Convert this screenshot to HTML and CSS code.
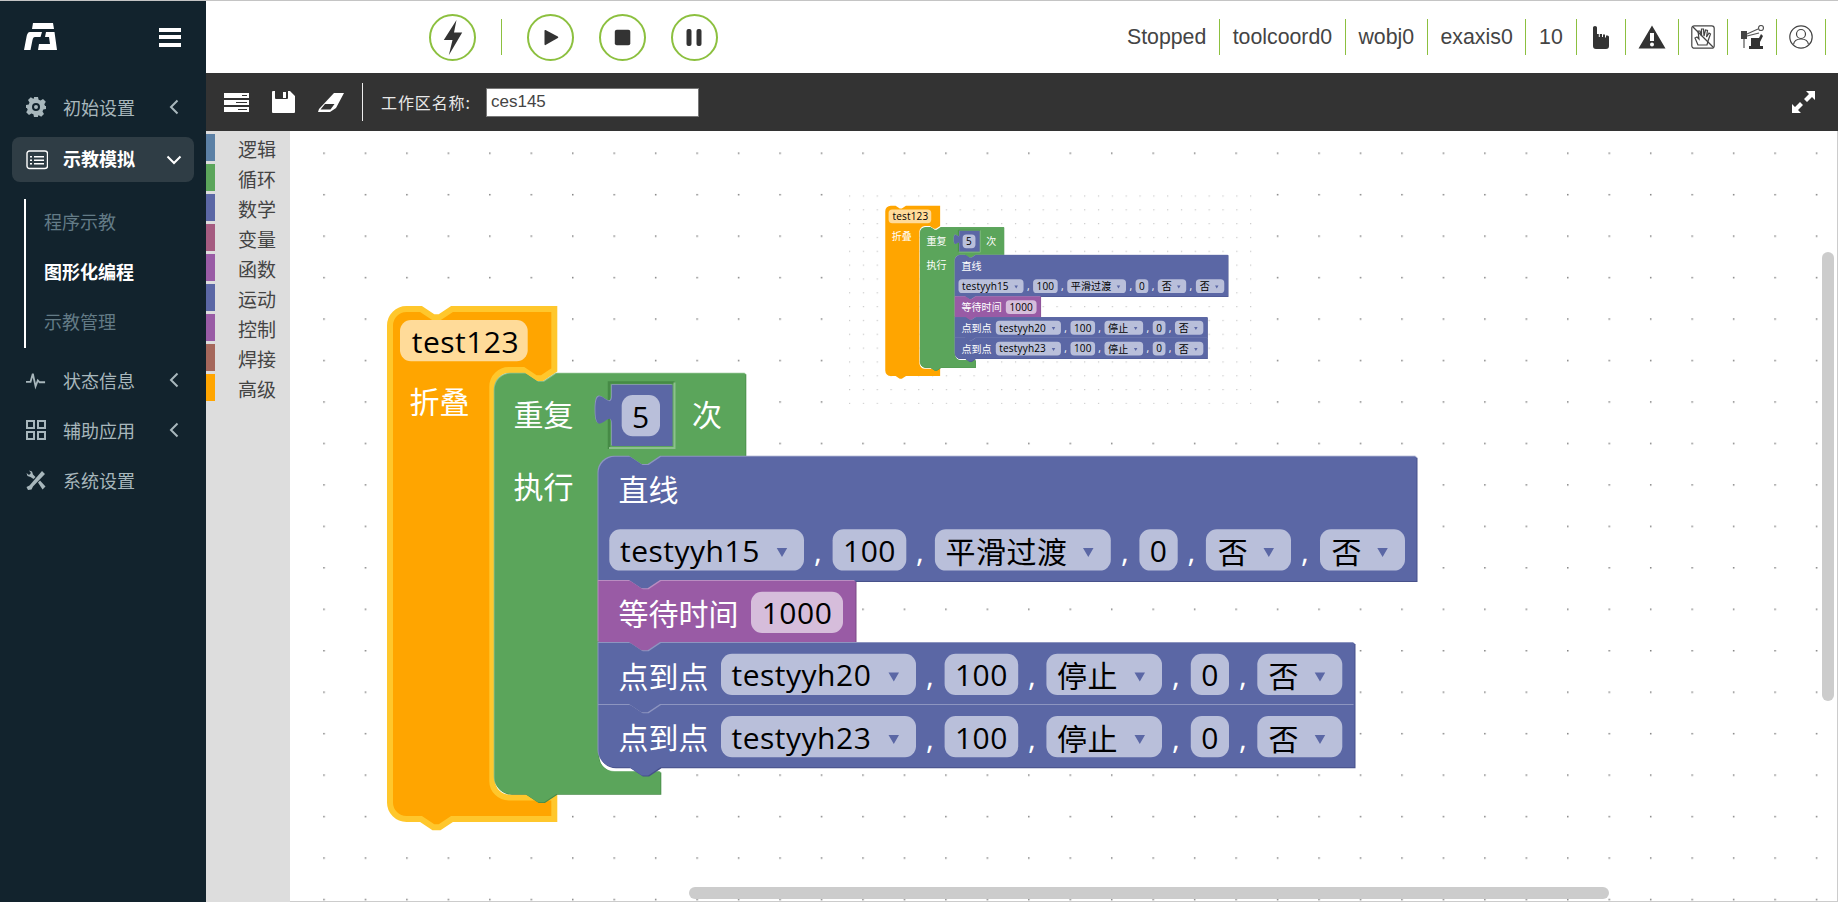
FILE: index.html
```html
<!DOCTYPE html>
<html>
<head>
    <meta charset="utf-8" />
    <title>图形化编程</title>
    <link rel="stylesheet" href="styles.css">
</head>
<body>
    <aside class="side">
        <div class="brand">
            <svg class="logo" viewBox="0 0 33 27"><path d="M9 0H29L30 6H8Z"/><path d="M6 9H18L16.500 14H11C9.500 14 9 15 8.500 17L6.500 27H0L2.500 14C3 11 4 9 6 9Z"/><path d="M22 9H30.500L33 27H14L15 21H26L25 14H21Z"/></svg>
            <div class="burger"><span></span><span></span><span></span></div>
        </div>
        <nav class="menu">
            <a class="item">
                <svg class="ico" viewBox="0 0 20 20"><path d="M8 0H12L12.600 2.700 14.600 3.500 17 2 19.800 4.800 18.300 7.200 19.100 9 20 9V12L17.300 12.600 16.500 14.600 18 17 15.200 19.800 12.800 18.300 12 18.700 12 20H8L7.400 17.300 5.400 16.500 3 18 .2 15.200 1.700 12.800.9 11 0 11V8L2.700 7.400 3.500 5.400 2 3 4.800 .2 7.200 1.700 8 1.300ZM10 6A4 4 0 1 0 10 14 4 4 0 1 0 10 6ZM10 8A2 2 0 1 1 10 12 2 2 0 1 1 10 8Z" fill-rule="evenodd"/></svg>
                <span>初始设置</span>
                <svg class="chev" viewBox="0 0 10 16"><path d="M8.500 1.500 2 8l6.500 6.500"/></svg>
            </a>
            <a class="item active">
                <svg class="ico" viewBox="0 0 22 20"><rect x="1" y="1" width="20.500" height="17.500" rx="2.500" class="line"/><path d="M4 6H6V7.500H4ZM8 6H18V7.500H8ZM4 9.500H6V11H4ZM8 9.500H18V11H8ZM4 13H6V14.500H4ZM8 13H18V14.500H8Z"/></svg>
                <span>示教模拟</span>
                <svg class="chev down" viewBox="0 0 16 10"><path d="M1.500 1.500 8 8l6.500-6.500"/></svg>
            </a>
            <div class="sub">
                <a>程序示教</a>
                <a class="current">图形化编程</a>
                <a>示教管理</a>
            </div>
            <a class="item">
                <svg class="ico" viewBox="0 0 22 20"><path class="line" d="M0 12H5L7.500 3 10.500 17 13 10.500 15 12.500H21"/></svg>
                <span>状态信息</span>
                <svg class="chev" viewBox="0 0 10 16"><path d="M8.500 1.500 2 8l6.500 6.500"/></svg>
            </a>
            <a class="item">
                <svg class="ico" viewBox="0 0 20 20"><path class="line" d="M1 1H8V8H1ZM12 1H19V8H12ZM1 12H8V19H1ZM12 12H19V19H12Z"/></svg>
                <span>辅助应用</span>
                <svg class="chev" viewBox="0 0 10 16"><path d="M8.500 1.500 2 8l6.500 6.500"/></svg>
            </a>
            <a class="item">
                <svg class="ico" viewBox="0 0 20 20"><path d="M3 .5 6 1.500 7 4.500 9.500 7 7.500 9 4.500 7 1.500 6 .5 3 3 5 5 3ZM16 1 19 4 7 16.500 5.500 19.500 2 20 .5 17 3.500 15.500ZM12 12.500 14 10.500 19.500 16.500 16.500 19.500Z"/></svg>
                <span>系统设置</span>
            </a>
        </nav>
    </aside>

    <div class="page">
        <header class="topbar">
            <div class="run">
                <button class="round"><svg viewBox="0 0 47 47"><path d="M27.500 6 14.800 26H23.500L19.800 41.200 33.200 18.500H25Z"/></svg></button>
                <i class="vline"></i>
                <button class="round"><svg viewBox="0 0 47 47"><path d="M18.500 16 30.800 22.500Q32 23.300 30.800 24L18.500 31Q17.500 31.500 17.500 30V17Q17.500 15.500 18.500 16Z"/></svg></button>
                <button class="round"><svg viewBox="0 0 47 47"><rect x="15.800" y="15.800" width="15.500" height="15.500" rx="2"/></svg></button>
                <button class="round"><svg viewBox="0 0 47 47"><rect x="15.500" y="15" width="5" height="17" rx="2"/><rect x="25.500" y="15" width="5" height="17" rx="2"/></svg></button>
            </div>
            <ul class="status">
                <li>Stopped</li>
                <li>toolcoord0</li>
                <li>wobj0</li>
                <li>exaxis0</li>
                <li>10</li>
                <li class="tile"><svg class="st-ico hand" viewBox="0 0 17 23"><path d="M1 1.500Q1 0 3 0 5 0 5 1.500V8H6.800V11H7.800V8H10V11H11V8.500H13V11.500H14V9.500H15.500Q17 9.500 17 11V20Q17 23 14 23H4Q1 23 1 20Z"/></svg></li>
                <li class="tile wide"><svg class="st-ico warn" viewBox="0 0 28 24"><path fill-rule="evenodd" d="M14 .5 27.500 23.500H.5ZM12 8V16H16V8ZM14 17.500A2 2 0 1 0 14 21.500 2 2 0 1 0 14 17.500Z"/></svg></li>
                <li class="tile"><svg class="st-ico nohand" viewBox="0 0 24 24"><rect x=".8" y=".8" width="22.400" height="22.400" rx="2.500"/><path d="M7 20 4 13 6 12 8 14 7 6 9 6 10.500 11 10.500 4 12.500 4 13 11 14.500 5 16.500 5.500 15.500 12 18 8 19.500 9 17 16 16 20Z"/><path d="M2 2 22 22"/></svg></li>
                <li class="tile"><svg class="st-ico robot" viewBox="0 0 24 24"><rect x="1" y="6" width="6" height="8" fill="#444"/><path class="w" d="M4 14V23"/><path class="w" d="M7 9 18 4M7 11 19 8"/><circle class="w" cx="21" cy="3" r="2.500"/><path d="M11 13H19L21 9 23 11 20 17V21H23V24H9V21H11Z"/></svg></li>
                <li class="tile"><svg class="st-ico user" viewBox="0 0 24 24"><circle cx="12" cy="12" r="11.200"/><circle cx="12" cy="9" r="4.500"/><path d="M4.500 19.500C5 16 8 14 12 14S19 16 19.500 19.500"/></svg></li>
            </ul>
        </header>

        <div class="toolbar">
            <svg class="tool-ico" width="25" height="19" viewBox="0 0 25 19"><path fill-rule="evenodd" d="M0 0H25V5H0ZM18 2V3H23V2ZM0 7H25V12H0ZM12 9V10H23V9ZM0 14H25V19H0ZM14 16V17H23V16Z"/></svg>
            <svg class="tool-ico" width="23" height="22" viewBox="0 0 23 22"><path fill-rule="evenodd" d="M0 1Q0 0 1 0H3V7Q3 8 4 8H15Q16 8 16 7V0H18L23 5V21Q23 22 22 22H1Q0 22 0 21ZM11 1H14V7H11Z"/></svg>
            <svg class="tool-ico" width="26" height="19" viewBox="0 0 26 19"><path fill-rule="evenodd" d="M16 0H26L18 15 12 19H0L1 16ZM7 11 2.500 16.500H12.500L16.500 11Z"/></svg>
            <i class="tool-line"></i>
            <label class="ws-label">工作区名称:</label>
            <input class="ws-name" type="text" value="ces145" />
            <svg class="expand" width="23" height="22" viewBox="0 0 23 22"><path d="M14 0H23V9L20 6 15 11 12 8 17 3ZM9 22H0V13L3 16 8 11 11 14 6 19Z"/></svg>
        </div>

        <main class="editor">
            <div class="toolbox">
                <div class="cat"><i class="c-logic"></i>逻辑</div>
                <div class="cat"><i class="c-loop"></i>循环</div>
                <div class="cat"><i class="c-math"></i>数学</div>
                <div class="cat"><i class="c-var"></i>变量</div>
                <div class="cat"><i class="c-func"></i>函数</div>
                <div class="cat"><i class="c-move"></i>运动</div>
                <div class="cat"><i class="c-ctrl"></i>控制</div>
                <div class="cat"><i class="c-weld"></i>焊接</div>
                <div class="cat"><i class="c-adv"></i>高级</div>
            </div>
            <div class="canvas">
                <svg class="ws" width="1548" height="770">
                    <defs>
                        <pattern id="grid" patternUnits="userSpaceOnUse" x="572" y="318.300" width="41.460" height="41.460"><rect width="1.500" height="1.500" fill="#808080"/></pattern>
                        <pattern id="grid-mini" patternUnits="userSpaceOnUse" x="849" y="195.400" width="13.830" height="13.830"><rect width="1.200" height="1.200" fill="#c8c8c8"/></pattern>

                        <path id="p-orange" d="M390 325.500A16.500 16.500 0 0 1 406.500 309H421l12.400 8.300 6.200 0 12.400-8.300H554.300V370l-12.400 8.300-6.200 0-12.400-8.300H509A16.500 16.500 0 0 0 492.300 386.500V781A16.500 16.500 0 0 0 509 797.500H554.300V819H452l-12.400 8.300-6.200 0-12.400-8.300H406.500A16.500 16.500 0 0 1 390 802.500Z"/>
                        <path id="p-green" d="M494.500 390A16.500 16.500 0 0 1 511 373.500H525.500l12.400 8.300 6.200 0 12.400-8.300H745.500V456.500H660.500l-12.400 8.300-6.200 0-12.400-8.300H615A16.500 16.500 0 0 0 598.500 473V755A16.500 16.500 0 0 0 615 771.700H660.500V794H556.500l-12.400 8.300-6.200 0-12.400-8.300H511A16.500 16.500 0 0 1 494.500 777.500Z"/>
                        <path id="p-val" d="M612 385H672.500V446H612V425.500c0-20.700-16.600 16.600-16.600-15.500s16.600 5.200 16.600-15.500Z"/>
                        <path id="p-line" d="M598.500 473A16.500 16.500 0 0 1 615 456.700H630l12.400 8.300 6.200 0 12.400-8.300H1416.500V581H660.500l-12.400 8.300-6.200 0-12.400-8.300H598.500Z"/>
                        <path id="p-wait" d="M598.500 581H630l12.400 8.300 6.200 0 12.400-8.300H855.500V642.500H660.500l-12.400 8.300-6.200 0-12.400-8.300H598.500Z"/>
                        <path id="p-pt1" d="M598.500 643H630l12.400 8.300 6.200 0 12.400-8.300H1354.500V705H660.500l-12.400 8.300-6.200 0-12.400-8.300H598.500Z"/>
                        <path id="p-pt2" d="M598.500 705H630l12.400 8.300 6.200 0 12.400-8.300H1354.500V767.300H660.500l-12.400 8.300-6.200 0-12.400-8.300H615A16.500 16.500 0 0 1 598.500 750.800Z"/>

                        <g id="shapes">
                            <use href="#p-green" class="g-light" transform="translate(-.8 -.8)"/>
                            <use href="#p-green" class="g-dark" transform="translate(.8 .8)"/>
                            <use href="#p-green" class="g-fill"/>
                            <path class="g-hole-d" d="M609 449V382.500H674.500"/>
                            <path class="g-hole-l" d="M674.500 382.500V448H609"/>
                            <use href="#p-val" class="b-light" transform="translate(-.8 -.8)"/>
                            <use href="#p-val" class="b-fill"/>

                            <use href="#p-line" class="b-light" transform="translate(-1 -1)"/>
                            <use href="#p-line" class="b-dark" transform="translate(1 1)"/>
                            <use href="#p-line" class="b-fill"/>
                            <use href="#p-wait" class="p-light" transform="translate(-1 -1)"/>
                            <use href="#p-wait" class="p-dark" transform="translate(1 1)"/>
                            <use href="#p-wait" class="p-fill"/>
                            <use href="#p-pt1" class="b-light" transform="translate(-1 -1)"/>
                            <use href="#p-pt1" class="b-dark" transform="translate(1 1)"/>
                            <use href="#p-pt1" class="b-fill"/>
                            <use href="#p-pt2" class="b-light" transform="translate(-1 -1)"/>
                            <use href="#p-pt2" class="b-dark" transform="translate(1 1)"/>
                            <use href="#p-pt2" class="b-fill"/>

                            <rect class="chip-o" x="400" y="320" width="127.700" height="41.300" rx="11"/>
                            <rect class="chip" x="621.700" y="395" width="38.300" height="41.300" rx="11"/>

                            <rect class="chip" x="609.300" y="529.300" width="194.700" height="41.300" rx="11"/>
                            <rect class="chip" x="832.600" y="529.300" width="73.700" height="41.300" rx="11"/>
                            <rect class="chip" x="934.900" y="529.300" width="175.900" height="41.300" rx="11"/>
                            <rect class="chip" x="1139.400" y="529.300" width="38.300" height="41.300" rx="11"/>
                            <rect class="chip" x="1205.900" y="529.300" width="85.100" height="41.300" rx="11"/>
                            <rect class="chip" x="1320" y="529.300" width="85" height="41.300" rx="11"/>

                            <rect class="chip-p" x="751" y="591.700" width="92" height="41.300" rx="11"/>

                            <rect class="chip" x="721" y="653.700" width="195" height="41.300" rx="11"/>
                            <rect class="chip" x="944.600" y="653.700" width="73.600" height="41.300" rx="11"/>
                            <rect class="chip" x="1046.400" y="653.700" width="115.600" height="41.300" rx="11"/>
                            <rect class="chip" x="1190.800" y="653.700" width="38.200" height="41.300" rx="11"/>
                            <rect class="chip" x="1257.300" y="653.700" width="85" height="41.300" rx="11"/>

                            <rect class="chip" x="721" y="716" width="195" height="41.300" rx="11"/>
                            <rect class="chip" x="944.600" y="716" width="73.600" height="41.300" rx="11"/>
                            <rect class="chip" x="1046.400" y="716" width="115.600" height="41.300" rx="11"/>
                            <rect class="chip" x="1190.800" y="716" width="38.200" height="41.300" rx="11"/>
                            <rect class="chip" x="1257.300" y="716" width="85" height="41.300" rx="11"/>

                            <path class="arrow" d="M776.700 548H787.200L782 557ZM1083 548H1093.500L1088.300 557ZM1263.500 548H1274L1268.800 557ZM1377.300 548H1387.800L1382.600 557Z"/>
                            <path class="arrow" d="M888.500 672.500H899L893.800 681.500ZM1134.500 672.500H1145L1139.800 681.500ZM1314.700 672.500H1325.200L1320 681.500Z"/>
                            <path class="arrow" d="M888.500 735H899L893.800 744ZM1134.500 735H1145L1139.800 744ZM1314.700 735H1325.200L1320 744Z"/>
                        </g>
                    </defs>

                    <g transform="translate(-290 -131)">
                        <rect x="290" y="131" width="1548" height="771" fill="url(#grid)"/>
                        <rect x="849" y="193" width="405" height="211" fill="#fff"/>
                        <rect x="849" y="193" width="405" height="211" fill="url(#grid-mini)"/>

                        <g transform="translate(755 102.500) scale(.334)">
                            <use href="#p-orange" class="o-fill"/>
                            <use href="#shapes"/>
                            <text class="val" x="411.700" y="353">test123</text>
                            <text class="lbl" x="409.500" y="413">折叠</text>
                            <text class="lbl" x="513.500" y="425.500">重复</text>
                            <text class="val mid" x="640.800" y="427.500">5</text>
                            <text class="lbl" x="692" y="425.500">次</text>
                            <text class="lbl" x="513.500" y="498">执行</text>
                            <text class="lbl" x="618.500" y="500.500">直线</text>
                            <text class="val" x="620" y="561.800">testyyh15</text>
                            <text class="lbl" x="814" y="561.800">,</text>
                            <text class="val mid" x="869.500" y="561.800">100</text>
                            <text class="lbl" x="916" y="561.800">,</text>
                            <text class="val" x="945.400" y="562.500">平滑过渡</text>
                            <text class="lbl" x="1121" y="561.800">,</text>
                            <text class="val mid" x="1158.500" y="561.800">0</text>
                            <text class="lbl" x="1187.500" y="561.800">,</text>
                            <text class="val" x="1217.700" y="562.500">否</text>
                            <text class="lbl" x="1301" y="561.800">,</text>
                            <text class="val" x="1331.500" y="562.500">否</text>
                            <text class="lbl" x="618.500" y="624.500">等待时间</text>
                            <text class="val mid" x="797" y="624">1000</text>
                            <text class="lbl" x="618.500" y="688">点到点</text>
                            <text class="val" x="731.500" y="686">testyyh20</text>
                            <text class="lbl" x="926" y="686">,</text>
                            <text class="val mid" x="981.400" y="686">100</text>
                            <text class="lbl" x="1028" y="686">,</text>
                            <text class="val" x="1057" y="687">停止</text>
                            <text class="lbl" x="1172" y="686">,</text>
                            <text class="val mid" x="1210" y="686">0</text>
                            <text class="lbl" x="1239" y="686">,</text>
                            <text class="val" x="1268.500" y="687">否</text>
                            <text class="lbl" x="618.500" y="749">点到点</text>
                            <text class="val" x="731.500" y="748.500">testyyh23</text>
                            <text class="lbl" x="926" y="748.500">,</text>
                            <text class="val mid" x="981.400" y="748.500">100</text>
                            <text class="lbl" x="1028" y="748.500">,</text>
                            <text class="val" x="1057" y="749.500">停止</text>
                            <text class="lbl" x="1172" y="748.500">,</text>
                            <text class="val mid" x="1210" y="748.500">0</text>
                            <text class="lbl" x="1239" y="748.500">,</text>
                            <text class="val" x="1268.500" y="749.500">否</text>
                        </g>

                        <g>
                            <use href="#p-orange" class="o-fill selected"/>
                            <use href="#shapes"/>
                            <text class="val" x="411.700" y="353">test123</text>
                            <text class="lbl" x="409.500" y="413">折叠</text>
                            <text class="lbl" x="513.500" y="425.500">重复</text>
                            <text class="val mid" x="640.800" y="427.500">5</text>
                            <text class="lbl" x="692" y="425.500">次</text>
                            <text class="lbl" x="513.500" y="498">执行</text>
                            <text class="lbl" x="618.500" y="500.500">直线</text>
                            <text class="val" x="620" y="561.800">testyyh15</text>
                            <text class="lbl" x="814" y="561.800">,</text>
                            <text class="val mid" x="869.500" y="561.800">100</text>
                            <text class="lbl" x="916" y="561.800">,</text>
                            <text class="val" x="945.400" y="562.500">平滑过渡</text>
                            <text class="lbl" x="1121" y="561.800">,</text>
                            <text class="val mid" x="1158.500" y="561.800">0</text>
                            <text class="lbl" x="1187.500" y="561.800">,</text>
                            <text class="val" x="1217.700" y="562.500">否</text>
                            <text class="lbl" x="1301" y="561.800">,</text>
                            <text class="val" x="1331.500" y="562.500">否</text>
                            <text class="lbl" x="618.500" y="624.500">等待时间</text>
                            <text class="val mid" x="797" y="624">1000</text>
                            <text class="lbl" x="618.500" y="688">点到点</text>
                            <text class="val" x="731.500" y="686">testyyh20</text>
                            <text class="lbl" x="926" y="686">,</text>
                            <text class="val mid" x="981.400" y="686">100</text>
                            <text class="lbl" x="1028" y="686">,</text>
                            <text class="val" x="1057" y="687">停止</text>
                            <text class="lbl" x="1172" y="686">,</text>
                            <text class="val mid" x="1210" y="686">0</text>
                            <text class="lbl" x="1239" y="686">,</text>
                            <text class="val" x="1268.500" y="687">否</text>
                            <text class="lbl" x="618.500" y="749">点到点</text>
                            <text class="val" x="731.500" y="748.500">testyyh23</text>
                            <text class="lbl" x="926" y="748.500">,</text>
                            <text class="val mid" x="981.400" y="748.500">100</text>
                            <text class="lbl" x="1028" y="748.500">,</text>
                            <text class="val" x="1057" y="749.500">停止</text>
                            <text class="lbl" x="1172" y="748.500">,</text>
                            <text class="val mid" x="1210" y="748.500">0</text>
                            <text class="lbl" x="1239" y="748.500">,</text>
                            <text class="val" x="1268.500" y="749.500">否</text>
                        </g>
                    </g>
                </svg>
                <div class="scroll-v"></div>
                <div class="scroll-h"></div>
            </div>
        </main>
    </div>
</body>
</html>
```

FILE: styles.css
```css
* {
    box-sizing: border-box;
}

html, body {
    margin: 0;
    padding: 0;
    height: 100%;
}

body {
    display: flex;
    height: 902px;
    overflow: hidden;
    border-top: 1px solid #c4c4c4;
    font-family: "Noto Sans CJK SC", "Liberation Sans", sans-serif;
    background: #fff;
}

/* sidebar */
.side {
    width: 206px;
    flex: none;
    background: #12232d;
    color: #a8b7bc;
    font-size: 18px;
}

.brand {
    height: 72px;
    display: flex;
    align-items: center;
    justify-content: space-between;
    padding: 0 25px 0 24px;
}

.logo {
    width: 33px;
    height: 27px;
    fill: #fff;
    margin-bottom: 1px;
}

.burger span {
    display: block;
    width: 22px;
    height: 4px;
    margin: 3.500px 0;
    background: #fff;
}

.menu {
    padding: 11px 12px 0;
}

.item {
    display: flex;
    align-items: center;
    height: 45px;
    margin-bottom: 5px;
    padding-left: 14px;
    border-radius: 8px;
}

.item span {
    margin-left: 17px;
}

.ico {
    width: 20px;
    height: 20px;
    flex: none;
    fill: #a8b7bc;
}

.ico .line {
    fill: none;
    stroke: #a8b7bc;
    stroke-width: 2;
}

.chev {
    width: 10px;
    height: 16px;
    margin-left: auto;
    margin-right: 15px;
    fill: none;
    stroke: #a8b7bc;
    stroke-width: 2;
}

.item.active {
    margin-top: 8px;
    background: #2f3d45;
    color: #fff;
    font-weight: bold;
}

.item.active span {
    padding-bottom: 3px;
}

.item.active .ico {
    width: 22px;
    margin-right: -2px;
    fill: #fff;
}

.item.active .ico .line {
    stroke: #fff;
    stroke-width: 1.400;
}

.chev.down {
    width: 16px;
    height: 10px;
    margin-right: 12px;
    stroke: #fff;
}

.sub {
    margin: 17px 0 9px 12px;
    height: 149px;
    padding-left: 18px;
    border-left: 2px solid #fff;
    color: #637b86;
}

.sub a {
    display: flex;
    align-items: center;
    height: 49.660px;
    padding-bottom: 5px;
}

.sub .current {
    color: #fff;
    font-weight: bold;
}

/* top */
.page {
    flex: 1;
    min-width: 0;
    display: flex;
    flex-direction: column;
}

.topbar {
    height: 72px;
    flex: none;
    display: flex;
    align-items: center;
    justify-content: space-between;
    padding: 0 12px 0 223px;
}

.run {
    display: flex;
    align-items: center;
}

.round {
    width: 47px;
    height: 47px;
    padding: 0;
    margin-right: 25px;
    border: 2px solid #8cc03f;
    border-radius: 50%;
    background: #fff;
}

.round svg {
    display: block;
    width: 47px;
    height: 47px;
    margin: -2px;
    fill: #333;
}

.vline {
    width: 1px;
    height: 36px;
    margin-right: 25px;
    background: #8cc03f;
}

.status {
    display: flex;
    align-items: center;
    margin: 0;
    padding: 0;
    list-style: none;
    font-family: "Liberation Sans", sans-serif;
    font-size: 21.300px;
    color: #444;
}

.status li {
    display: flex;
    align-items: center;
    height: 36px;
    padding: 0 12.700px;
    border-right: 1px solid #8cc03f;
}

.status .tile {
    width: 49px;
    padding: 0;
    justify-content: center;
}

.status .tile.wide {
    width: 53.500px;
}

.st-ico {
    display: block;
    width: 24px;
    height: 24px;
    fill: #333;
}

.st-ico.hand {
    width: 17px;
    height: 23px;
}

.st-ico.warn {
    width: 28px;
}

.st-ico.nohand, .st-ico.user {
    fill: none;
    stroke: #444;
    stroke-width: 1.200;
}

.st-ico.robot .w {
    fill: none;
    stroke: #555;
    stroke-width: 1.200;
}

/* toolbar */
.toolbar {
    height: 58px;
    flex: none;
    display: flex;
    align-items: center;
    padding: 0 23px 0 18px;
    background: #333;
    color: #e8e8e8;
}

.tool-ico {
    fill: #fff;
    margin-right: 23px;
}

.tool-line {
    width: 1px;
    height: 38px;
    margin-left: -5px;
    background: #eee;
}

.ws-label {
    width: 105px;
    margin-left: 18px;
    font-size: 16px;
    letter-spacing: .9px;
}

.ws-name {
    width: 213px;
    height: 29px;
    padding: 0 4px;
    border: 1px solid #777;
    font-family: "Liberation Sans", sans-serif;
    font-size: 17px;
    color: #444;
}

.expand {
    margin-left: auto;
    fill: #fff;
}

/* workspace */
.editor {
    flex: 1;
    min-height: 0;
    display: flex;
}

.toolbox {
    width: 84px;
    flex: none;
    padding-top: 3px;
    background: #ddd;
    color: #444;
    font-size: 19px;
}

.cat {
    display: flex;
    align-items: center;
    height: 27px;
    margin-bottom: 3px;
    padding-top: 1px;
}

.cat i {
    align-self: flex-start;
    width: 9px;
    height: 27px;
    margin: -1px 23px 0 0;
}

.c-logic { background: #5b80a5; }
.c-loop { background: #5ba55b; }
.c-math { background: #5b67a5; }
.c-var { background: #a55b80; }
.c-func { background: #995ba5; }
.c-move { background: #5b67a5; }
.c-ctrl { background: #995ba5; }
.c-weld { background: #a5675b; }
.c-adv { background: #ffa500; }

.canvas {
    flex: 1;
    position: relative;
    overflow: hidden;
    border-right: 1px solid #ccc;
    border-bottom: 1px solid #ccc;
}

.ws {
    display: block;
}

.scroll-v {
    position: absolute;
    left: 1532px;
    top: 121px;
    width: 12px;
    height: 449px;
    border-radius: 6px;
    background: #ccc;
}

.scroll-h {
    position: absolute;
    left: 399px;
    top: 756px;
    width: 920px;
    height: 12px;
    border-radius: 6px;
    background: #ccc;
}

/* blocks */
.o-fill { fill: #ffa500; }
.selected { stroke: #ffc72c; stroke-width: 6; stroke-miterlimit: 1.500; }
.g-fill { fill: #5ba55b; }
.g-light { fill: #8cc08c; }
.g-dark { fill: #468a46; }
.g-hole-d { fill: none; stroke: #468a46; stroke-width: 2.500; }
.g-hole-l { fill: none; stroke: #8cc08c; stroke-width: 2; }
.b-fill { fill: #5b67a5; }
.b-light { fill: #8d95c0; }
.b-dark { fill: #47518a; }
.p-fill { fill: #995ba5; }
.p-light { fill: #b98dc1; }
.p-dark { fill: #7b4a85; }
.chip { fill: #b9bfda; }
.chip-o { fill: #ffdb99; }
.chip-p { fill: #d6bddb; }
.arrow { fill: #5b67a5; }

.lbl, .val {
    font-family: "Open Sans", "Noto Sans CJK SC", sans-serif;
    font-size: 30px;
}

.lbl { fill: #fff; }
.val { fill: #000; letter-spacing: .5px; }
.mid { text-anchor: middle; }
```
